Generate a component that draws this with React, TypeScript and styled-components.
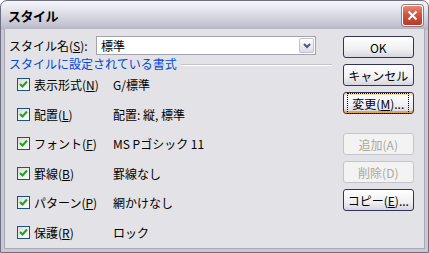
import React from "react";
import styled, { createGlobalStyle, css } from "styled-components";

const GlobalStyle = createGlobalStyle`
  html, body {
    margin: 0;
    padding: 0;
    background: #ffffff;
  }
  body {
    font-family: "Noto Sans CJK JP", "Noto Sans", sans-serif;
    font-size: 12px;
    color: #000;
  }
`;

const Window = styled.div`
  width: 429px;
  height: 253px;
  box-sizing: border-box;
  border: 1px solid #6f6f82;
  border-radius: 7px 7px 0 0;
  background: linear-gradient(#f6f6fa 0px, #e6e6ee 8px, #c4c4d2 24px, #b4b4c4 28px, #c9c9d4 29px, #c9c9d4 100%);
  display: flex;
  flex-direction: column;
  overflow: hidden;
`;

const TitleBar = styled.div`
  height: 28px;
  flex: none;
  display: flex;
  align-items: center;
  padding: 0 5px 0 7px;
`;

const Title = styled.div`
  flex: 1;
  font-size: 13px;
  font-weight: bold;
  letter-spacing: -0.5px;
  color: #000;
`;

const CloseButton = styled.div`
  width: 21px;
  height: 21px;
  box-sizing: border-box;
  border: 1px solid #ffffff;
  border-radius: 3px;
  background: linear-gradient(#e88a78, #d2533f 45%, #b83a2a);
  box-shadow: 0 0 0 1px #9a7a7a;
  display: flex;
  align-items: center;
  justify-content: center;
`;

const Client = styled.div`
  flex: 1;
  margin: 0 3px 3px 3px;
  background: #e3e2e6;
  border: 1px solid #a8a8b6;
  border-top: none;
  display: flex;
  padding: 7px 10px 0 4px;
`;

const LeftPanel = styled.div`
  width: 325px;
  display: flex;
  flex-direction: column;
`;

const NameRow = styled.div`
  height: 19px;
  display: flex;
  align-items: center;
`;

const NameLabel = styled.div`
  width: 87px;
`;

const Combo = styled.div`
  width: 220px;
  height: 19px;
  box-sizing: border-box;
  border: 1px solid #a3a3b0;
  background: #fff;
  display: flex;
  align-items: center;
  padding: 1px;
`;

const ComboText = styled.div`
  flex: 1;
  padding-left: 3px;
`;

const DropButton = styled.div`
  width: 15px;
  height: 15px;
  box-sizing: border-box;
  border: 1px solid #c2c2cc;
  border-radius: 2px;
  background: linear-gradient(#ffffff, #dcdce4);
  display: flex;
  align-items: center;
  justify-content: center;
`;

const GroupHeader = styled.div`
  height: 14px;
  margin-top: 1px;
  display: flex;
  align-items: center;
  color: #0046d5;
`;

const GroupLine = styled.div`
  flex: 1;
  height: 1px;
  margin-left: 4px;
  margin-top: 2px;
  background: #c3c3cc;
  box-shadow: 0 1px 0 #ffffff;
`;

const Row = styled.div`
  height: 29.5px;
  display: flex;
  align-items: center;
`;

const CheckBox = styled.div`
  width: 13px;
  height: 13px;
  box-sizing: border-box;
  margin-left: 8px;
  border: 1px solid #1c5180;
  background: linear-gradient(135deg, #dcdcd6, #ffffff);
  display: flex;
  align-items: center;
  justify-content: center;
`;

const RowLabel = styled.div`
  width: 79px;
  margin-left: 4px;
  white-space: nowrap;
`;

const RowValue = styled.div`
  white-space: nowrap;
`;

const RightColumn = styled.div`
  margin-left: 11px;
  width: 72px;
  display: flex;
  flex-direction: column;
`;

const Button = styled.div<{ $disabled?: boolean; $focused?: boolean; $gap?: number }>`
  height: 22px;
  box-sizing: border-box;
  margin-bottom: ${(p) => p.$gap ?? 6}px;
  border: 1px solid #33335a;
  border-radius: 3px;
  background: linear-gradient(#ffffff, #f0f0f4 60%, #d6d6e0);
  display: flex;
  align-items: center;
  justify-content: center;
  white-space: nowrap;
  ${(p) =>
    p.$focused &&
    css`
      box-shadow: inset 0 -2px 0 #e8a63c, inset 0 2px 0 #fcdca0;
    `}
  ${(p) =>
    p.$disabled &&
    css`
      border-color: #c4c4cc;
      background: #f3f3f3;
      color: #aca899;
    `}
`;

const FocusRing = styled.span`
  outline: 1px dotted #000;
  outline-offset: 1px;
  padding: 0 3px;
`;

function Check() {
  return (
    <svg width="9" height="9" viewBox="0 0 9 9">
      <path d="M1 4 L3.5 6.5 L8 1.5" stroke="#21a121" strokeWidth="2" fill="none" />
    </svg>
  );
}

const rows = [
  { label: "表示形式", key: "N", value: "G/標準" },
  { label: "配置", key: "L", value: "配置: 縦, 標準" },
  { label: "フォント", key: "F", value: "MS Pゴシック 11" },
  { label: "罫線", key: "B", value: "罫線なし" },
  { label: "パターン", key: "P", value: "網かけなし" },
  { label: "保護", key: "R", value: "ロック" },
];

function Access({ k }: { k: string }) {
  return (
    <>
      (<u>{k}</u>)
    </>
  );
}

export default function App() {
  return (
    <>
      <GlobalStyle />
      <Window>
        <TitleBar>
          <Title>スタイル</Title>
          <CloseButton>
            <svg width="11" height="11" viewBox="0 0 11 11">
              <path d="M1.5 1.5 L9.5 9.5 M9.5 1.5 L1.5 9.5" stroke="#fff" strokeWidth="2" />
            </svg>
          </CloseButton>
        </TitleBar>
        <Client>
          <LeftPanel>
            <NameRow>
              <NameLabel>
                スタイル名<Access k="S" />:
              </NameLabel>
              <Combo>
                <ComboText>標準</ComboText>
                <DropButton>
                  <svg width="8" height="6" viewBox="0 0 8 6">
                    <path d="M1 1 L4 4 L7 1" stroke="#4d5a78" strokeWidth="2" fill="none" />
                  </svg>
                </DropButton>
              </Combo>
            </NameRow>
            <GroupHeader>
              スタイルに設定されている書式
              <GroupLine />
            </GroupHeader>
            {rows.map((r) => (
              <Row key={r.key}>
                <CheckBox>
                  <Check />
                </CheckBox>
                <RowLabel>
                  {r.label}
                  <Access k={r.key} />
                </RowLabel>
                <RowValue>{r.value}</RowValue>
              </Row>
            ))}
          </LeftPanel>
          <RightColumn>
            <Button>OK</Button>
            <Button>キャンセル</Button>
            <Button $focused $gap={19}>
              <FocusRing>
                変更<Access k="M" />...
              </FocusRing>
            </Button>
            <Button $disabled>追加(A)</Button>
            <Button $disabled>削除(D)</Button>
            <Button>
              コピー<Access k="E" />...
            </Button>
          </RightColumn>
        </Client>
      </Window>
    </>
  );
}
